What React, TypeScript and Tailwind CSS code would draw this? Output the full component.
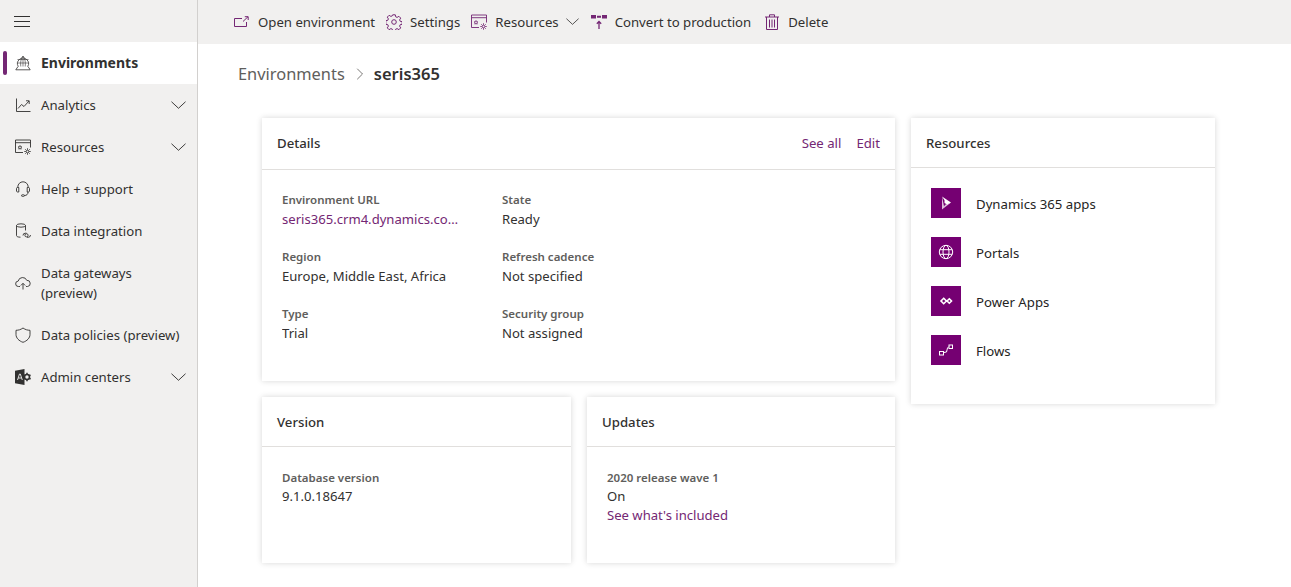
import React from 'react';
import { ChevronRight } from 'lucide-react';

type IconProps = { className?: string };

const Chevron: React.FC<IconProps> = ({ className }) => (
  <svg viewBox="0 0 16 8" className={className} fill="none" stroke="currentColor" strokeWidth="1">
    <path d="M.5.5 8 7.500 15.500.5" />
  </svg>
);

const Globe: React.FC<IconProps> = ({ className }) => (
  <svg viewBox="0 0 16 16" className={className} fill="none" stroke="currentColor" strokeWidth=".8">
    <path d="M3.300 11.500a5.500 5.500 0 1 1 9.400 0" />
    <path d="M2.500 4.500h11M2.300 8h11.400M8 1v10.500M8 1C5.800 3 5.300 8.500 5.800 11.500M8 1c2.200 2 2.700 7.500 2.200 10.500" strokeWidth=".6" />
    <path d="M3 11.500.8 14.800h14.400L13 11.500" />
  </svg>
);

const Analytics: React.FC<IconProps> = ({ className }) => (
  <svg viewBox="0 0 16 16" className={className} fill="none" stroke="currentColor" strokeWidth=".9">
    <path d="M1.500 1.500v13h14" />
    <path d="M3 11.500 6.500 7.500l2.500 2L14 4M11 3.800h3.200V7" />
  </svg>
);

const ResourceWindow: React.FC<IconProps> = ({ className }) => (
  <svg viewBox="0 0 16 16" className={className} fill="none" stroke="currentColor" strokeWidth=".9">
    <path d="M8 13.500H.5V1h15v7.500M.5 3.700h15" />
    <path d="M5 6.500l.6 1.200 1.300.2-1 .9.300 1.300L5 9.500l-1.200.6.300-1.300-1-.9 1.300-.2z" strokeWidth="0.8" />
    <circle cx="12.500" cy="12.500" r="1.300" />
    <path d="M12.500 9.300v1.500M12.500 14.200v1.500M9.300 12.500h1.500M14.200 12.500h1.500M10.300 10.300l1 1M13.700 13.700l1 1M14.700 10.300l-1 1M11.300 13.700l-1 1" />
  </svg>
);

const Headset: React.FC<IconProps> = ({ className }) => (
  <svg viewBox="0 0 16 16" className={className} fill="none" stroke="currentColor" strokeWidth=".9">
    <path d="M2.800 6.500V6a5.200 5.200 0 0 1 10.400 0v.5" />
    <path d="M2.500 6.500h1.300v4.500H2.500A1.200 1.200 0 0 1 1.500 10V7.500a1 1 0 0 1 1-1zM13.500 6.500h-1.300V11h1.300a1.200 1.200 0 0 0 1-1V7.500a1 1 0 0 0-1-1z" />
    <path d="M13 11c0 2.500-1.500 3.500-3.500 3.500" />
    <rect x="6.500" y="13.800" width="3" height="1.500" rx=".7" />
  </svg>
);

const DataIntegration: React.FC<IconProps> = ({ className }) => (
  <svg viewBox="0 0 16 16" className={className} fill="none" stroke="currentColor" strokeWidth=".9">
    <ellipse cx="6" cy="2.500" rx="4.500" ry="1.700" />
    <path d="M1.500 2.500v10c0 1 1.500 1.700 4 1.700M10.500 2.500v5" />
    <path d="M8 12.500a2.300 2.300 0 0 1 2.300-2.300h1.200M15.500 12a2.300 2.300 0 0 1-2.300 2.300H12" />
    <circle cx="11.500" cy="12.300" r="1.600" />
  </svg>
);

const CloudUp: React.FC<IconProps> = ({ className }) => (
  <svg viewBox="0 0 16 16" className={className} fill="none" stroke="currentColor" strokeWidth=".9">
    <path d="M5 11.500H3.500a2.700 2.700 0 0 1-.3-5.400 4.500 4.500 0 0 1 8.600-.7 3 3 0 0 1 .7 6.100H11" />
    <path d="M8 14.500V8.500M5.800 10.500 8 8.300l2.200 2.200" />
  </svg>
);

const Shield: React.FC<IconProps> = ({ className }) => (
  <svg viewBox="0 0 16 16" className={className} fill="none" stroke="currentColor" strokeWidth=".9">
    <path d="M8 1C5.500 2.800 3.500 3.200 1 3.300v4.200C1 11 4 14 8 15.300c4-1.300 7-4.300 7-7.800V3.300C12.500 3.200 10.500 2.800 8 1z" />
  </svg>
);

const AdminCenters: React.FC<IconProps> = ({ className }) => (
  <svg viewBox="0 0 16 16" className={className}>
    <path d="M0 1.800 9.500 0v16L0 14.200z" fill="currentColor" />
    <path d="M2.500 11 4.500 5h.8l2 6M3.300 9h3.200" stroke="#f1f0ef" strokeWidth=".9" fill="none" />
    <circle cx="12" cy="8" r="2.500" fill="none" stroke="currentColor" strokeWidth="1.600" />
    <path d="M12 3.800v1.400M12 10.800v1.400M8.500 6l1.300.7M14.300 9.300l1.300.7M15.500 6l-1.300.7M9.700 9.300 8.500 10" stroke="currentColor" strokeWidth="1.500" />
  </svg>
);

const OpenEnv: React.FC<IconProps> = ({ className }) => (
  <svg viewBox="0 0 16 16" className={className} fill="none" stroke="currentColor" strokeWidth="1">
    <path d="M9 4.500H1.500v8h12V8" />
    <path d="M10 7.500 15 2.700M11.800 2.700h3.400V6" />
  </svg>
);

const Gear: React.FC<IconProps> = ({ className }) => (
  <svg viewBox="0 0 16 16" className={className} fill="none" stroke="currentColor" strokeWidth="1">
    <circle cx="8" cy="8" r="2.300" />
    <path d="M6.700.8h2.600l.4 2 1.400.6 1.800-1.100 1.800 1.800-1.100 1.800.6 1.400 2 .4v2.600l-2 .4-.6 1.400 1.100 1.800-1.800 1.800-1.800-1.100-1.400.6-.4 2H6.700l-.4-2-1.400-.6-1.800 1.100-1.800-1.800 1.100-1.800-.6-1.400-2-.4V6.700l2-.4.6-1.400L1.300 3.100l1.800-1.800 1.800 1.100 1.400-.6z" />
  </svg>
);

const Convert: React.FC<IconProps> = ({ className }) => (
  <svg viewBox="0 0 16 16" className={className}>
    <path d="M0 1h5v3.500H0zM11 1h5v3.500h-5zM6 1.700h4v2H6z" fill="currentColor" />
    <path d="M8 15V7.500M5.800 9.700 8 7.500l2.200 2.200" stroke="currentColor" strokeWidth="1.300" fill="none" />
  </svg>
);

const Trash: React.FC<IconProps> = ({ className }) => (
  <svg viewBox="0 0 16 16" className={className} fill="none" stroke="currentColor" strokeWidth="1">
    <path d="M1 3h14M5.500 3V.8h5V3M2.500 3v12.500h11V3M5.500 5.500v8M8 5.500v8M10.500 5.500v8" />
  </svg>
);

const DynamicsMark = () => (
  <svg viewBox="0 0 30 30" className="h-[30px] w-[30px]">
    <path d="M11 8.500 20 14.500l-3.800 2-2.700-1.500v-2.800z" fill="#fff" />
    <path d="M11 8.500v13l9-7-5.500 2-1.500 1.800z" fill="#fff" opacity=".75" />
  </svg>
);

const PortalMark = () => (
  <svg viewBox="0 0 30 30" className="h-[30px] w-[30px]" fill="none" stroke="#fff" strokeWidth="1">
    <circle cx="15" cy="15" r="6.700" />
    <ellipse cx="15" cy="15" rx="3" ry="6.700" />
    <path d="M8.800 12.700h12.400M8.800 17.300h12.400" />
  </svg>
);

const PowerAppsMark = () => (
  <svg viewBox="0 0 30 30" className="h-[30px] w-[30px]" fill="none" stroke="#fff" strokeWidth="1.600">
    <path d="m12.700 12.300 2.700 2.700-2.700 2.700L10 15zM18.300 12.800l2.200 2.200-2.200 2.200-2.200-2.200z" />
  </svg>
);

const FlowsMark = () => (
  <svg viewBox="0 0 30 30" className="h-[30px] w-[30px]" fill="none" stroke="#fff" strokeWidth="1">
    <rect x="8.500" y="16.500" width="4" height="3.500" />
    <rect x="18" y="10" width="3.500" height="3.500" />
    <path d="m13 17.500 2.500-.5 1-4 1.500-1.500" />
  </svg>
);

const navItems = [
  { label: 'Analytics', icon: Analytics, chevron: true },
  { label: 'Resources', icon: ResourceWindow, chevron: true },
  { label: 'Help + support', icon: Headset },
  { label: 'Data integration', icon: DataIntegration },
  { label: 'Data gateways (preview)', icon: CloudUp, tall: true },
  { label: 'Data policies (preview)', icon: Shield, nowrap: true },
  { label: 'Admin centers', icon: AdminCenters, chevron: true },
];

const Sidebar = () => (
  <aside className="w-[198px] shrink-0 border-r border-[#d2d0ce] bg-[#f1f0ef] text-[#323130]">
    <div className="flex h-[42px] items-center pl-[14px]">
      <div className="flex w-4 flex-col gap-[4px]">
        <span className="h-px bg-[#323130]" />
        <span className="h-px bg-[#323130]" />
        <span className="h-px bg-[#323130]" />
      </div>
    </div>
    <div className="relative flex h-[42px] items-center bg-white pl-[15px]">
      <span className="absolute left-[3px] top-[9px] h-6 w-1 rounded-sm bg-[#742774]" />
      <Globe className="h-4 w-4" />
      <span className="mb-[2px] ml-[10px] text-[14px] font-bold">Environments</span>
    </div>
    {navItems.map((item) => (
      <div key={item.label} className={`flex items-center pl-[15px] pr-[11px] ${item.tall ? 'h-[62px]' : 'h-[42px]'}`}>
        <item.icon className="h-4 w-4 shrink-0" />
        <span className={`ml-[10px] flex-1 text-[13.2px] leading-5 ${item.tall ? 'max-w-[110px]' : ''} ${item.nowrap ? 'whitespace-nowrap' : ''}`}>{item.label}</span>
        {item.chevron && <Chevron className="h-2 w-[15px]" />}
      </div>
    ))}
  </aside>
);

const ToolbarButton: React.FC<{ icon: React.FC<IconProps>; label: string; className?: string }> = ({ icon: Icon, label, className = 'gap-2' }) => (
  <div className={`flex items-center ${className}`}>
    <Icon className="h-4 w-4 text-[#742774]" />
    <span className="pt-[2px]">{label}</span>
  </div>
);

const Toolbar = () => (
  <div className="flex h-11 items-center bg-[#f1f0ef] pl-[35px] text-[13.2px] text-[#323130]">
    <ToolbarButton icon={OpenEnv} label="Open environment" className="gap-[9px]" />
    <ToolbarButton icon={Gear} label="Settings" className="ml-[11px] gap-2" />
    <div className="ml-[11px] flex items-center gap-[7px]">
      <ToolbarButton icon={ResourceWindow} label="Resources" />
      <Chevron className="h-[7px] w-[13px]" />
    </div>
    <ToolbarButton icon={Convert} label="Convert to production" className="ml-3 gap-2" />
    <ToolbarButton icon={Trash} label="Delete" className="ml-[13px] gap-2" />
  </div>
);

const Field: React.FC<{ label: string; value: string; link?: boolean; spaced?: boolean }> = ({ label, value, link, spaced }) => (
  <div>
    <div className="text-[11.5px] font-semibold leading-[18px] text-[#605e5c]">{label}</div>
    <div className={`truncate text-[13.1px] leading-[19px] ${spaced ? 'mt-px' : ''} ${link ? 'text-[#742774]' : 'text-[#323130]'}`}>{value}</div>
  </div>
);

const Card: React.FC<{ title: string; className: string; actions?: React.ReactNode; headerClass?: string; children: React.ReactNode }> = ({ title, className, actions, headerClass = 'h-[49px]', children }) => (
  <section className={`bg-white shadow-[0_0_6px_rgba(0,0,0,0.16)] ${className}`}>
    <div className={`flex items-center justify-between border-b border-[#e1dfdd] pl-[15px] pr-[15px] text-[13.2px] font-medium text-[#323130] ${headerClass}`}>
      <span>{title}</span>
      {actions}
    </div>
    {children}
  </section>
);

const resources = [
  { label: 'Dynamics 365 apps', mark: DynamicsMark },
  { label: 'Portals', mark: PortalMark },
  { label: 'Power Apps', mark: PowerAppsMark },
  { label: 'Flows', mark: FlowsMark },
];

export default function App() {
  return (
    <div className="flex h-[587px] overflow-hidden bg-white font-['Noto_Sans','Open_Sans',sans-serif]">
      <Sidebar />
      <main className="min-w-0 flex-1">
        <Toolbar />
        <div className="flex h-[60px] items-center pl-10">
          <span className="text-[16.400px] text-[#605e5c]">Environments</span>
          <ChevronRight className="ml-[5px] mr-1 h-5 w-5 text-[#605e5c]" strokeWidth={1} />
          <span className="text-[16.500px] font-semibold text-[#323130]">seris365</span>
        </div>
        <div className="mt-[14px] flex gap-4 pl-16">
          <div className="flex w-[633px] flex-col gap-4">
            <Card
              title="Details"
              className="h-[263px]"
              headerClass="h-[52px]"
              actions={
                <div className="flex gap-[15px] font-normal text-[#742774]">
                  <span>See all</span>
                  <span>Edit</span>
                </div>
              }
            >
              <div className="grid grid-cols-[220px_220px] gap-y-[19px] pl-5 pt-[21px]">
                <div className="w-[177px]"><Field label="Environment URL" value="seris365.crm4.dynamics.com" link spaced /></div>
                <Field label="State" value="Ready" spaced />
                <Field label="Region" value="Europe, Middle East, Africa" spaced />
                <Field label="Refresh cadence" value="Not specified" spaced />
                <Field label="Type" value="Trial" spaced />
                <Field label="Security group" value="Not assigned" spaced />
              </div>
            </Card>
            <div className="flex gap-4">
              <Card title="Version" className="h-[166px] w-[309px]" headerClass="h-[50px] pt-[2px]">
                <div className="pl-5 pt-[22px]">
                  <Field label="Database version" value="9.1.0.18647" />
                </div>
              </Card>
              <Card title="Updates" className="h-[166px] w-[308px]" headerClass="h-[50px] pt-[2px]">
                <div className="pl-5 pt-[22px]">
                  <Field label="2020 release wave 1" value="On" />
                  <div className="text-[13.1px] leading-[19px] text-[#742774]">See what's included</div>
                </div>
              </Card>
            </div>
          </div>
          <Card title="Resources" className="h-[286px] w-[304px]" headerClass="h-[50px] pt-[2px]">
            <div className="flex flex-col gap-[19px] pl-5 pt-5">
              {resources.map((r) => (
                <div key={r.label} className="flex items-center gap-[15px] text-[13.2px] text-[#252423]">
                  <div className="flex h-[30px] w-[30px] items-center justify-center bg-[#750072]">
                    <r.mark />
                  </div>
                  <span className="pt-1">{r.label}</span>
                </div>
              ))}
            </div>
          </Card>
        </div>
      </main>
    </div>
  );
}
